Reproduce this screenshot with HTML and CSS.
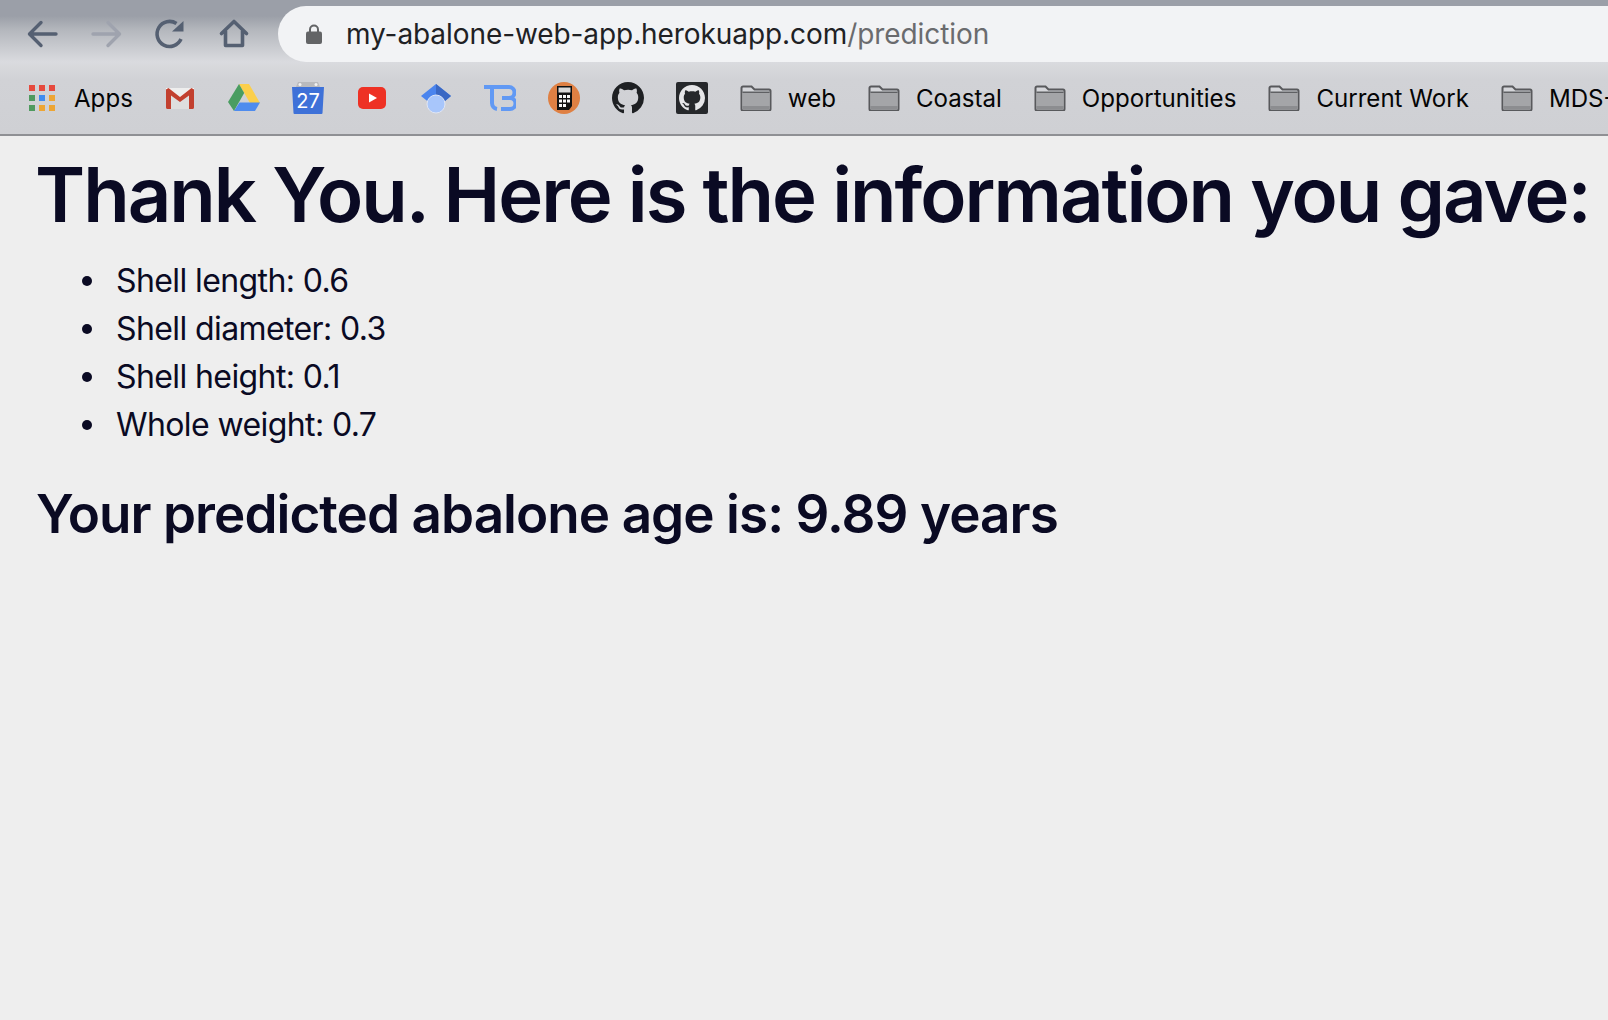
FILE: index.html
```html
<!DOCTYPE html>
<html lang="en">
<head>
    <meta charset="UTF-8">
    <meta name="viewport" content="width=device-width, initial-scale=1.0">
    <title>Prediction</title>
    <link rel="stylesheet" href="styles.css">
</head>
<body>
    <svg class="defs" width="0" height="0">
        <symbol id="folder" viewBox="0 0 32 26">
            <path d="M1.500 24V3a1.500 1.500 0 0 1 1.500-1.500h8.500l3 3H29a1.500 1.500 0 0 1 1.500 1.500v18a1.500 1.500 0 0 1-1.500 1.500H3A1.500 1.500 0 0 1 1.500 24z" fill="#d5d6da" stroke="#58595c" stroke-width="2"/>
            <rect x="2.500" y="8" width="27" height="13" fill="#a4a5a8"/>
            <rect x="2.500" y="21" width="27" height="3.500" fill="#8c8d90"/>
            <rect x="2.500" y="6.500" width="27" height="1.500" fill="#5f6063"/>
        </symbol>
        <symbol id="octocat" viewBox="0 0 16 16">
            <path d="M8 0C3.58 0 0 3.58 0 8c0 3.54 2.29 6.53 5.47 7.59.4.07.55-.17.55-.38 0-.19-.01-.82-.01-1.49-2.01.37-2.53-.49-2.69-.94-.09-.23-.48-.94-.82-1.13-.28-.15-.68-.52-.01-.53.63-.01 1.08.58 1.23.82.72 1.21 1.87.87 2.33.66.07-.52.28-.87.51-1.07-1.78-.2-3.64-.89-3.64-3.95 0-.87.31-1.59.82-2.15-.08-.2-.36-1.02.08-2.12 0 0 .67-.21 2.2.82.64-.18 1.32-.27 2-.27.68 0 1.36.09 2 .27 1.53-1.04 2.2-.82 2.2-.82.44 1.1.16 1.92.08 2.12.51.56.82 1.27.82 2.15 0 3.07-1.87 3.75-3.65 3.95.29.25.54.73.54 1.48 0 1.07-.01 1.93-.01 2.2 0 .21.15.46.55.38A8.013 8.013 0 0 0 16 8c0-4.42-3.58-8-8-8z"/>
        </symbol>
    </svg>

    <header class="browser">
        <div class="toolbar">
            <div class="nav-buttons">
                <svg class="icon" viewBox="0 0 32 32"><path d="M30 16H5M15 4.500 3.500 16 15 27.500" fill="none" stroke="#556072" stroke-width="3.400" stroke-linecap="round" stroke-linejoin="round"/></svg>
                <svg class="icon" viewBox="0 0 32 32"><path d="M3 16h25M18 4.500 29.500 16 18 27.500" fill="none" stroke="#9fa3ae" stroke-width="3.400" stroke-linecap="round" stroke-linejoin="round"/></svg>
                <svg class="icon" viewBox="0 0 32 32"><path d="M27 21A12.500 12.500 0 1 1 22.500 5.500" fill="none" stroke="#556072" stroke-width="3.600"/><path d="M18 13.500 29.500 3v10.500z" fill="#556072"/></svg>
                <svg class="icon" viewBox="0 0 32 32"><path d="M3.500 15.500 16 3.500l12.500 12M7.500 13v14.500h17V13" fill="none" stroke="#556072" stroke-width="3.600" stroke-linecap="round" stroke-linejoin="round"/></svg>
            </div>
            <div class="url-bar">
                <svg class="lock" viewBox="0 0 16 20"><path d="M4 9V5.500a4 4 0 0 1 8 0V9" fill="none" stroke="#636466" stroke-width="2"/><rect y="7.500" width="16" height="12.500" rx="2" fill="#636466"/></svg>
                <span class="url">my-abalone-web-app.herokuapp.com<span class="url-path">/prediction</span></span>
            </div>
        </div>

        <nav class="bookmarks">
            <a class="bookmark apps">
                <svg class="icon" viewBox="0 0 32 32">
                    <rect x="3" y="3" width="6" height="6" fill="#e64a3e"/><rect x="13" y="3" width="6" height="6" fill="#e64a3e"/><rect x="23" y="3" width="6" height="6" fill="#e64a3e"/>
                    <rect x="3" y="13" width="6" height="6" fill="#4f9a5f"/><rect x="13" y="13" width="6" height="6" fill="#3f8cf0"/><rect x="23" y="13" width="6" height="6" fill="#eda534"/>
                    <rect x="3" y="23" width="6" height="6" fill="#4f9a5f"/><rect x="13" y="23" width="6" height="6" fill="#eda534"/><rect x="23" y="23" width="6" height="6" fill="#eda534"/>
                </svg>
                Apps
            </a>
            <svg class="icon" viewBox="0 0 32 32">
                <rect x="2" y="6" width="28" height="21" rx="1.500" fill="#eeeeee"/>
                <path d="M2 27V8l14 11L30 8v19" fill="#dedede"/>
                <path d="M2 6h3l11 9 11-9h3v1L16 19 2 7z" fill="#f6f6f6"/>
                <path d="M2 7.500v18A1.500 1.500 0 0 0 3.500 27H7V13.500l9 6.500 9-6.500V27h3.500a1.500 1.500 0 0 0 1.500-1.500v-18L27.500 6 16 15 4.500 6z" fill="#c2402f"/>
            </svg>
            <svg class="icon" viewBox="0 0 32 32">
                <path d="M11 2h10l11 19H22z" fill="#fbcf4b"/>
                <path d="M11 2l5.200 9L6 29 0 20z" fill="#4a9d61"/>
                <path d="M11.500 20.500H32L27 29H6z" fill="#4f8cee"/>
            </svg>
            <svg class="icon" viewBox="0 0 32 32">
                <path d="M6 0h20l2 5H4z" fill="#b9babd"/>
                <circle cx="8" cy="2.500" r="1.500" fill="#f2f2f2"/><circle cx="24" cy="2.500" r="1.500" fill="#f2f2f2"/>
                <path d="M0 5h32l-1.500 26a1 1 0 0 1-1 1h-27a1 1 0 0 1-1-1z" fill="#3e71d8"/>
                <text class="cal-day" x="16" y="26">27</text>
            </svg>
            <svg class="icon" viewBox="0 0 32 32">
                <rect x="2" y="5" width="28" height="22" rx="5" fill="#ee3124"/>
                <path d="M13 11.500 21 16l-8 4.500z" fill="#fff"/>
            </svg>
            <svg class="icon" viewBox="0 0 32 32">
                <path d="M16 2 31 14 16 26 1 14z" fill="#4a84ee"/>
                <path d="M16 2 31 14 24 20 16 14z" fill="#3a68c4"/>
                <circle cx="16" cy="22" r="9" fill="#a8c6fb" stroke="#dfe6f5" stroke-width="1"/>
            </svg>
            <svg class="icon" viewBox="0 0 32 32">
                <path d="M0 5h18M8 5v16a6 6 0 0 0 5 6M17 5h8a5 5 0 0 1 0 11h-7 8a5 5 0 0 1 0 11h-9" fill="none" stroke="#6199f4" stroke-width="4"/>
            </svg>
            <svg class="icon" viewBox="0 0 32 32">
                <circle cx="16" cy="16" r="16" fill="#df8043"/>
                <path d="M9 4h15v20l-3 4H9z" fill="#111"/>
                <rect x="10.500" y="5.500" width="12" height="5" fill="#d9d9d9"/>
                <g fill="#f7f7f7">
                    <rect x="11" y="13" width="3" height="3"/><rect x="15" y="13" width="3" height="3"/><rect x="19" y="13" width="3" height="3"/>
                    <rect x="11" y="17.500" width="3" height="3"/><rect x="15" y="17.500" width="3" height="3"/><rect x="19" y="17.500" width="3" height="3"/>
                    <rect x="11" y="22" width="3" height="3"/><rect x="15" y="22" width="3" height="3"/>
                </g>
            </svg>
            <svg class="icon octo" viewBox="0 0 16 16"><use href="#octocat"/></svg>
            <svg class="icon" viewBox="0 0 32 32">
                <rect width="32" height="32" rx="2" fill="#26282b"/>
                <svg x="3" y="3" width="26" height="26" viewBox="0 0 16 16" fill="#e6e6e8"><use href="#octocat"/></svg>
            </svg>
            <a class="bookmark"><svg class="folder"><use href="#folder"/></svg>web</a>
            <a class="bookmark"><svg class="folder"><use href="#folder"/></svg>Coastal</a>
            <a class="bookmark"><svg class="folder"><use href="#folder"/></svg>Opportunities</a>
            <a class="bookmark"><svg class="folder"><use href="#folder"/></svg>Current Work</a>
            <a class="bookmark"><svg class="folder"><use href="#folder"/></svg>MDS-Labs</a>
        </nav>
    </header>

    <main class="content">
        <h1>Thank You. Here is the information you gave:</h1>
        <ul>
            <li>Shell length: 0.6</li>
            <li>Shell diameter: 0.3</li>
            <li>Shell height: 0.1</li>
            <li>Whole weight: 0.7</li>
        </ul>
        <h2>Your predicted abalone age is: 9.89 years</h2>
    </main>
</body>
</html>
```

FILE: styles.css
```css
html, body {
    height: 100%;
}
body {
    margin: 0;
    overflow: hidden;
    background-color: #eeeeee;
    color: #0a0a23;
    font-family: Inter, "Noto Sans", sans-serif;
}
.defs {
    position: absolute;
}

/* Browser chrome */
.browser {
    height: 136px;
    box-sizing: border-box;
    border-bottom: 2px solid #8f9094;
    overflow: hidden;
    white-space: nowrap;
    background: linear-gradient(#9b9fa8 0, #9b9fa8 16px, #b4b7bd 30px, #dadbdf 62px, #d8d9dc 66px, #d1d2d6 80px, #cfd0d4 134px);
}
.toolbar {
    display: flex;
    align-items: center;
    height: 56px;
    padding-top: 6px;
}
.nav-buttons {
    display: flex;
    gap: 32px;
    padding-left: 26px;
    width: 252px;
}
.icon {
    width: 32px;
    height: 32px;
    flex: none;
}
.octo {
    fill: #1e2023;
}
.url-bar {
    flex: 1;
    display: flex;
    align-items: center;
    height: 56px;
    padding-left: 28px;
    background-color: #f2f3f5;
    border-radius: 28px 0 0 28px;
}
.lock {
    width: 16px;
    height: 20px;
    margin-right: 24px;
}
.url {
    font-size: 28px;
    letter-spacing: -0.08px;
    color: #202124;
}
.url-path {
    color: #6a6b6e;
}
.bookmarks {
    display: flex;
    align-items: center;
    gap: 32px;
    height: 72px;
    padding-left: 26px;
    box-sizing: border-box;
    font-size: 24.1px;
    color: #050505;
}
.bookmark {
    display: flex;
    align-items: center;
    gap: 16px;
    flex: none;
}
.apps {
    margin-right: -1px;
}
.folder {
    width: 32px;
    height: 26px;
}
.cal-day {
    font-size: 20px;
    fill: #ffffff;
    text-anchor: middle;
    font-family: Inter, sans-serif;
}

/* Page content */
.content {
    padding: 0 36px;
}
h1 {
    margin: 16px 0 0 -1px;
    font-size: 76px;
    line-height: 84px;
    font-weight: 600;
    letter-spacing: -2px;
    white-space: nowrap;
}
ul {
    margin: 21px 0 0;
    padding-left: 46px;
    list-style: none;
    font-size: 32px;
    line-height: 48px;
    letter-spacing: -0.6px;
}
li {
    display: flex;
    align-items: center;
    gap: 24px;
}
li::before {
    content: "";
    width: 10px;
    height: 10px;
    border-radius: 50%;
    background-color: #0a0a23;
}
h2 {
    margin: 29px 0 0;
    font-size: 53px;
    line-height: 72px;
    font-weight: 600;
    letter-spacing: -0.95px;
}
```
